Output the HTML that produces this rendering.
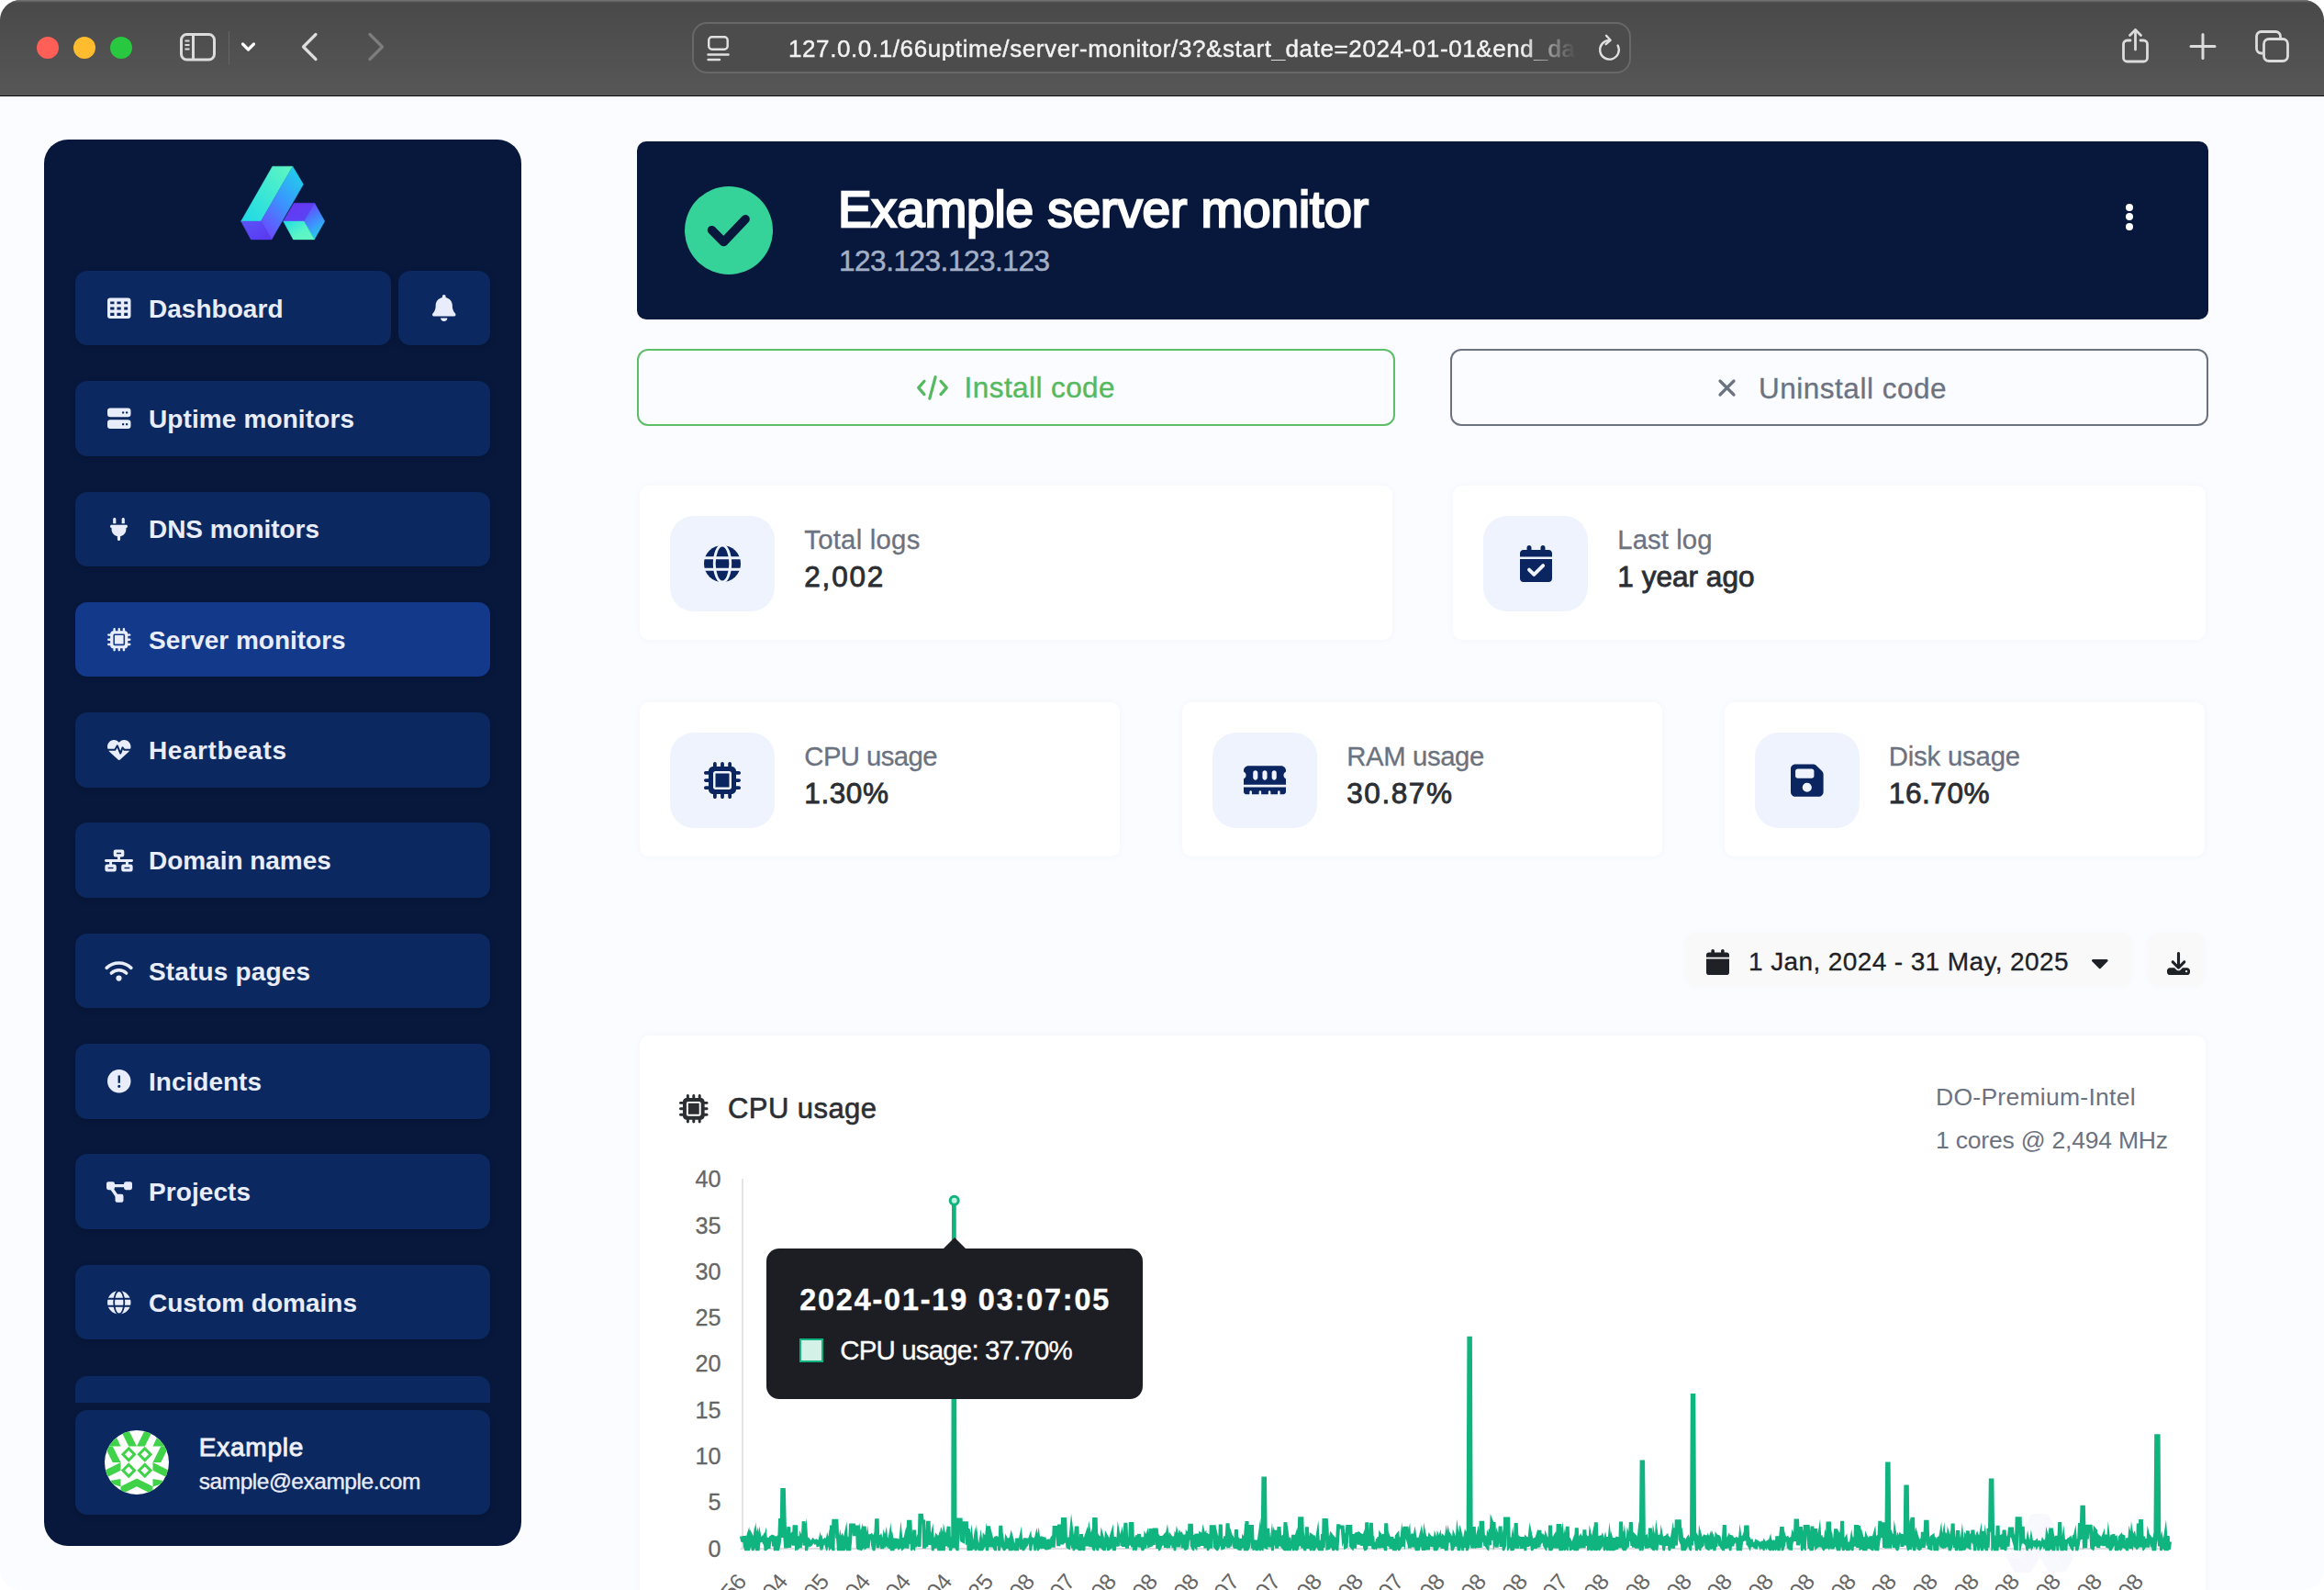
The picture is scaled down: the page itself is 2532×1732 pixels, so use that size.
<!DOCTYPE html>
<html lang="en"><head><meta charset="utf-8"><title>Example server monitor</title>
<style>
html,body{margin:0;padding:0;background:#fff}
body{width:2532px;height:1732px;overflow:hidden;position:relative;font-family:"Liberation Sans",Arial,sans-serif}
#win{position:absolute;left:0;top:0;width:2532px;height:1732px;border-radius:22px;overflow:hidden;background:#fafcff}
.a{position:absolute}
.t{position:absolute;white-space:nowrap;line-height:1;display:block}
svg{position:absolute;overflow:visible}
#tb{left:0;top:0;width:2532px;height:104px;background:linear-gradient(#494949,#4f4f4f 45%,#575757);border-bottom:1px solid #0c0c0c;box-sizing:content-box}
.nav{left:82px;width:452px;height:81.6px;border-radius:13px;background:#0b2960;box-shadow:0 2px 6px rgba(0,0,0,.18)}
.card{background:#fff;border-radius:10px;box-shadow:0 0 10px rgba(30,60,120,.035)}
.ib{background:#eef3fd;border-radius:26px}
</style></head><body><div id="win">
<div id="tb" class="a"></div><div class="a" style="left:0;top:0;width:2532px;height:3px;background:linear-gradient(#7a7a7a,#626262 45%,rgba(80,80,80,0))"></div><div class="a" style="left:40px;top:40px;width:24px;height:24px;border-radius:50%;background:#ff5f57"></div><div class="a" style="left:80px;top:40px;width:24px;height:24px;border-radius:50%;background:#febc2e"></div><div class="a" style="left:120px;top:40px;width:24px;height:24px;border-radius:50%;background:#28c840"></div><svg style="left:196px;top:36px" width="40" height="32" viewBox="0 0 40 32" fill="none" stroke="#dcdcdc" stroke-width="3">
<rect x="1.5" y="1.5" width="36" height="27.5" rx="6"/><line x1="14.5" y1="2" x2="14.5" y2="29"/>
<g stroke-width="2"><line x1="5.5" y1="8.5" x2="10.5" y2="8.5"/><line x1="5.5" y1="13" x2="10.5" y2="13"/><line x1="5.5" y1="17.5" x2="10.5" y2="17.5"/></g></svg><div class="a" style="left:249px;top:34px;width:1px;height:36px;background:#666"></div><svg style="left:262px;top:45px" width="18" height="14" viewBox="0 0 18 14" fill="none" stroke="#fff" stroke-width="3.2" stroke-linecap="round" stroke-linejoin="round"><path d="M2.5 3 L8.5 9 L14.5 3"/></svg><svg style="left:326px;top:34px" width="24" height="34" viewBox="0 0 24 34" fill="none" stroke="#dedede" stroke-width="3.2" stroke-linecap="round" stroke-linejoin="round"><path d="M18 3.5 L4.5 17 L18 30.5"/></svg><svg style="left:398px;top:34px" width="24" height="34" viewBox="0 0 24 34" fill="none" stroke="#7d7d7d" stroke-width="3.2" stroke-linecap="round" stroke-linejoin="round"><path d="M5 3.5 L18.5 17 L5 30.5"/></svg><div class="a" style="left:754px;top:24px;width:1023px;height:56px;box-sizing:border-box;border:2px solid #686868;border-radius:16px;background:#4c4c4c"></div><svg style="left:770px;top:38px" width="26" height="30" viewBox="0 0 26 30" fill="none" stroke="#e0e0e0" stroke-width="2.4" stroke-linecap="round">
<rect x="2.2" y="2.2" width="20.5" height="13.5" rx="3.5"/><line x1="1.5" y1="21.5" x2="23.5" y2="21.5"/><line x1="1.5" y1="27" x2="14" y2="27"/></svg><span id="t0" class="t" style="left:859.0px;top:40.4px;font-size:26.0px;font-weight:400;color:#f2f2f2;letter-spacing:0.596px;-webkit-text-stroke:.45px #f2f2f2;-webkit-mask-image:linear-gradient(90deg,#000 93%,transparent 100%);mask-image:linear-gradient(90deg,#000 93%,transparent 100%);">127.0.0.1/66uptime/server-monitor/3?&amp;start_date=2024-01-01&amp;end_da</span><svg style="left:1739px;top:37px" width="30" height="32" viewBox="0 0 30 32" fill="none" stroke="#e0e0e0" stroke-width="2.4" stroke-linecap="round" stroke-linejoin="round">
<path d="M23.6 12.5 A10.3 10.3 0 1 1 14.5 7"/><path d="M11 1.8 L15.6 6.8 L10.6 11.2"/></svg><svg style="left:2310px;top:30px" width="34" height="40" viewBox="0 0 34 40" fill="none" stroke="#dcdcdc" stroke-width="2.8" stroke-linecap="round" stroke-linejoin="round">
<path d="M11 14 H7.5 a4 4 0 0 0 -4 4 V33 a4 4 0 0 0 4 4 H25.5 a4 4 0 0 0 4 -4 V18 a4 4 0 0 0 -4 -4 H22"/><path d="M16.5 24 V3"/><path d="M10.5 8.5 L16.5 2.5 L22.5 8.5"/></svg><svg style="left:2385px;top:36px" width="30" height="30" viewBox="0 0 30 30" fill="none" stroke="#dcdcdc" stroke-width="3" stroke-linecap="round"><path d="M15 1.5 V27.5 M2 14.5 H28"/></svg><svg style="left:2456px;top:32px" width="40" height="38" viewBox="0 0 40 38" fill="none" stroke="#dcdcdc" stroke-width="2.8" stroke-linejoin="round">
<rect x="10.5" y="10.5" width="26" height="24" rx="5.5" fill="#4f4f4f"/><path d="M9.5 26 H7.5 a5 5 0 0 1 -5 -5 V7.5 a5 5 0 0 1 5 -5 H23.5 a5 5 0 0 1 5 5 V9.5"/></svg><div class="a" style="left:48px;top:152px;width:520px;height:1532px;border-radius:26px;background:#08183d"></div><svg style="left:250px;top:170px" width="120" height="100" viewBox="0 0 1908 1590">
<defs>
<linearGradient id="lgA" x1="0" y1="1" x2="1" y2="0"><stop offset="0" stop-color="#1fd8e8"/><stop offset=".55" stop-color="#3fe9d2"/><stop offset="1" stop-color="#62f7c0"/></linearGradient>
<linearGradient id="lgB" x1=".8" y1="0" x2=".2" y2="1"><stop offset="0" stop-color="#20d0ea"/><stop offset=".5" stop-color="#3b93ff"/><stop offset="1" stop-color="#6b48ff"/></linearGradient>
<linearGradient id="lgC" x1="0" y1="0" x2="1" y2="1"><stop offset="0" stop-color="#5a55f5"/><stop offset="1" stop-color="#5a36f2"/></linearGradient>
<linearGradient id="lgD" x1="0" y1="0" x2="1" y2="1"><stop offset="0" stop-color="#6b32f0"/><stop offset="1" stop-color="#5548f5"/></linearGradient>
<linearGradient id="lgE" x1=".3" y1="0" x2=".7" y2="1"><stop offset="0" stop-color="#6a40ff"/><stop offset=".5" stop-color="#3f8cff"/><stop offset="1" stop-color="#22d6e6"/></linearGradient>
<linearGradient id="lgF" x1="0" y1="0" x2="1" y2="1"><stop offset="0" stop-color="#22dbe6"/><stop offset=".6" stop-color="#5af5c6"/><stop offset="1" stop-color="#62f7c0"/></linearGradient>
</defs>
<g stroke-width="7" stroke-linejoin="round"><polygon points="745,178 1095,178 545,1130 200,1130" fill="url(#lgA)" stroke="url(#lgA)"/>
<polygon points="1095,178 1280,490 730,1445 545,1130" fill="url(#lgB)" stroke="url(#lgB)"/>
<polygon points="200,1130 545,1130 730,1445 372,1445" fill="url(#lgC)" stroke="url(#lgC)"/>
<polygon points="1115,815 1475,815 1292,1130 932,1130" fill="url(#lgD)" stroke="url(#lgD)"/>
<polygon points="1475,815 1650,1130 1470,1445 1292,1130" fill="url(#lgE)" stroke="url(#lgE)"/>
<polygon points="932,1130 1292,1130 1470,1445 1105,1445" fill="url(#lgF)" stroke="url(#lgF)"/></g>
</svg><div class="a nav" style="top:294.9px;width:344px;background:#0b2960"></div><svg style="left:116.9px;top:322.9px;color:#e9edfb" width="25.5" height="25.5" viewBox="0 0 512 512" fill="currentColor" preserveAspectRatio="none"><path fill-rule="evenodd" d="M64 32H448a64 64 0 0 1 64 64V416a64 64 0 0 1-64 64H64a64 64 0 0 1-64-64V96a64 64 0 0 1 64-64Z M64 108h86v57h-86z M210 108h86v57h-86z M366 108h78v57h-78z M64 232h86v58h-86z M210 232h86v58h-86z M366 232h78v58h-78z M64 356h86v64h-86z M210 356h86v64h-86z M366 356h78v64h-78z"/></svg><span id="t1" class="t" style="left:162.0px;top:322.8px;font-size:28.0px;font-weight:700;color:#e9edfb;letter-spacing:0.031px;">Dashboard</span><div class="a nav" style="top:415.2px;width:452px;background:#0b2960"></div><svg style="left:116.9px;top:443.2px;color:#e9edfb" width="25.5" height="25.5" viewBox="0 0 512 512" fill="currentColor" preserveAspectRatio="none"><path fill-rule="evenodd" d="M64 32H448a64 64 0 0 1 64 64v64a64 64 0 0 1-64 64H64a64 64 0 0 1-64-64V96a64 64 0 0 1 64-64Z M64 288H448a64 64 0 0 1 64 64v64a64 64 0 0 1-64 64H64a64 64 0 0 1-64-64v-64a64 64 0 0 1 64-64Z M320 128a24 24 0 1 0 48 0a24 24 0 1 0-48 0Z M400 128a24 24 0 1 0 48 0a24 24 0 1 0-48 0Z M320 384a24 24 0 1 0 48 0a24 24 0 1 0-48 0Z M400 384a24 24 0 1 0 48 0a24 24 0 1 0-48 0Z"/></svg><span id="t2" class="t" style="left:162.0px;top:443.1px;font-size:28.0px;font-weight:700;color:#e9edfb;letter-spacing:0.109px;">Uptime monitors</span><div class="a nav" style="top:535.5px;width:452px;background:#0b2960"></div><svg style="left:120.2px;top:563.8px;color:#e9edfb" width="19.0" height="25.0" viewBox="0 0 384 512" fill="currentColor" preserveAspectRatio="none"><path d="M96 0C78.3 0 64 14.3 64 32v96h64V32c0-17.7-14.3-32-32-32zM288 0c-17.700 0-32 14.300-32 32v96h64V32c0-17.700-14.300-32-32-32zM32 160c-17.700 0-32 14.300-32 32s14.300 32 32 32v32c0 77.400 55 142 128 156.800V480c0 17.700 14.300 32 32 32s32-14.300 32-32v-67.200C297 398 352 333.400 352 256v-32c17.700 0 32-14.300 32-32s-14.300-32-32-32H32z"/></svg><span id="t3" class="t" style="left:162.0px;top:563.4px;font-size:28.0px;font-weight:700;color:#e9edfb;letter-spacing:-0.062px;">DNS monitors</span><div class="a nav" style="top:655.8px;width:452px;background:#12398a"></div><svg style="left:116.9px;top:683.8px;color:#e9edfb" width="25.5" height="25.5" viewBox="0 0 512 512" fill="currentColor" preserveAspectRatio="none"><path fill-rule="evenodd" d="M176 24c0-13.300-10.700-24-24-24s-24 10.700-24 24v40c-35.300 0-64 28.700-64 64H24c-13.300 0-24 10.700-24 24s10.700 24 24 24h40v56H24c-13.300 0-24 10.700-24 24s10.700 24 24 24h40v56H24c-13.300 0-24 10.700-24 24s10.700 24 24 24h40c0 35.300 28.700 64 64 64v40c0 13.300 10.700 24 24 24s24-10.700 24-24v-40h56v40c0 13.300 10.700 24 24 24s24-10.700 24-24v-40h56v40c0 13.300 10.700 24 24 24s24-10.700 24-24v-40c35.300 0 64-28.700 64-64h40c13.300 0 24-10.700 24-24s-10.700-24-24-24h-40v-56h40c13.300 0 24-10.700 24-24s-10.700-24-24-24h-40v-56h40c13.300 0 24-10.700 24-24s-10.700-24-24-24h-40c0-35.300-28.700-64-64-64V24c0-13.300-10.700-24-24-24s-24 10.700-24 24v40h-56V24c0-13.300-10.700-24-24-24s-24 10.700-24 24v40h-56V24zM160 128h192c17.700 0 32 14.300 32 32v192c0 17.700-14.300 32-32 32H160c-17.700 0-32-14.300-32-32V160c0-17.700 14.300-32 32-32zm192 32H160v192h192V160z"/></svg><span id="t4" class="t" style="left:162.0px;top:683.7px;font-size:28.0px;font-weight:700;color:#e9edfb;letter-spacing:-0.004px;">Server monitors</span><div class="a nav" style="top:776.1px;width:452px;background:#0b2960"></div><svg style="left:116.9px;top:804.1px;color:#e9edfb" width="25.5" height="25.5" viewBox="0 0 512 512" fill="currentColor" preserveAspectRatio="none"><path d="M47.6 300.4L228.300 469.100c7.500 7 17.400 10.900 27.700 10.900s20.200-3.900 27.700-10.900L464.400 300.400c30.400-28.300 47.600-68 47.600-109.500v-5.800c0-69.900-50.500-129.500-119.400-141C347 36.500 300.600 51.400 268 84L256 96 244 84c-32.600-32.600-79-47.500-124.600-39.900C50.500 55.600 0 115.200 0 185.100v5.800c0 41.500 17.200 81.200 47.600 109.500z"/><path d="M-10 258H166l52-92 68 166 46-124 40 50H522" fill="none" stroke="#0b2960" stroke-width="40" stroke-linejoin="round"/></svg><span id="t5" class="t" style="left:162.0px;top:804.0px;font-size:28.0px;font-weight:700;color:#e9edfb;letter-spacing:0.585px;">Heartbeats</span><div class="a nav" style="top:896.4px;width:452px;background:#0b2960"></div><svg style="left:114.2px;top:924.7px;color:#e9edfb" width="31.0" height="25.0" viewBox="0 0 640 512" fill="currentColor" preserveAspectRatio="none"><g fill="none" stroke="currentColor" stroke-width="68" stroke-linejoin="round"><rect x="234" y="42" width="172" height="100" rx="14"/><rect x="42" y="370" width="188" height="100" rx="14"/><rect x="410" y="370" width="188" height="100" rx="14"/><path d="M320 150V256M136 364V256M504 364V256" stroke-width="60"/><path d="M30 256H610" stroke-width="60" stroke-linecap="round"/></g></svg><span id="t6" class="t" style="left:162.0px;top:924.3px;font-size:28.0px;font-weight:700;color:#e9edfb;letter-spacing:-0.034px;">Domain names</span><div class="a nav" style="top:1016.7px;width:452px;background:#0b2960"></div><svg style="left:114.2px;top:1045.0px;color:#e9edfb" width="31.0" height="25.0" viewBox="0 0 640 512" fill="currentColor" preserveAspectRatio="none"><g fill="none" stroke="currentColor" stroke-width="74" stroke-linecap="round"><path d="M44 192A400 400 0 0 1 596 192"/><path d="M152 308A245 245 0 0 1 488 308"/></g><circle cx="320" cy="420" r="64"/></svg><span id="t7" class="t" style="left:162.0px;top:1044.6px;font-size:28.0px;font-weight:700;color:#e9edfb;letter-spacing:0.156px;">Status pages</span><div class="a nav" style="top:1137.0px;width:452px;background:#0b2960"></div><svg style="left:116.9px;top:1165.0px;color:#e9edfb" width="25.5" height="25.5" viewBox="0 0 512 512" fill="currentColor" preserveAspectRatio="none"><path fill-rule="evenodd" d="M256 0a256 256 0 1 0 0 512a256 256 0 1 0 0-512Z M232 128h48v168h-48Z M224 368a32 32 0 1 0 64 0a32 32 0 1 0-64 0Z"/></svg><span id="t8" class="t" style="left:162.0px;top:1164.9px;font-size:28.0px;font-weight:700;color:#e9edfb;letter-spacing:0.010px;">Incidents</span><div class="a nav" style="top:1257.3px;width:452px;background:#0b2960"></div><svg style="left:115.7px;top:1285.6px;color:#e9edfb" width="28.0" height="25.0" viewBox="0 0 576 512" fill="currentColor" preserveAspectRatio="none"><rect x="0" y="24" width="184" height="184" rx="44"/><rect x="392" y="24" width="184" height="184" rx="44"/><rect x="196" y="304" width="184" height="184" rx="44"/><path d="M150 116H430M110 170L270 400" fill="none" stroke="currentColor" stroke-width="70"/></svg><span id="t9" class="t" style="left:162.0px;top:1285.2px;font-size:28.0px;font-weight:700;color:#e9edfb;letter-spacing:0.071px;">Projects</span><div class="a nav" style="top:1377.6px;width:452px;background:#0b2960"></div><svg style="left:116.9px;top:1405.6px;color:#e9edfb" width="25.5" height="25.5" viewBox="0 0 512 512" fill="currentColor" preserveAspectRatio="none"><circle cx="256" cy="256" r="256"/><g fill="none" stroke="#0b2960" stroke-width="36"><path d="M0 176H512M0 336H512"/><ellipse cx="256" cy="256" rx="112" ry="256"/></g></svg><span id="t10" class="t" style="left:162.0px;top:1405.5px;font-size:28.0px;font-weight:700;color:#e9edfb;letter-spacing:-0.011px;">Custom domains</span><div class="a nav" style="left:434px;top:294.9px;width:100px"></div><svg style="left:471.2px;top:321.3px;color:#e9edfb" width="25.5" height="29.0" viewBox="0 0 448 512" fill="currentColor" preserveAspectRatio="none"><path d="M224 0c-17.700 0-32 14.300-32 32v19.200C119 66 64 130.600 64 208v18.800c0 47-17.300 92.400-48.500 127.600l-7.400 8.300c-8.400 9.400-10.400 22.900-5.300 34.400S19.400 416 32 416h384c12.600 0 24-7.400 29.200-18.900s3.100-25-5.300-34.400l-7.400-8.300C401.300 319.200 384 273.900 384 226.800V208c0-77.400-55-142-128-156.800V32c0-17.700-14.300-32-32-32zm45.300 493.300c12-12 18.700-28.300 18.700-45.300h-128c0 17 6.700 33.300 18.700 45.300s28.300 18.700 45.300 18.700s33.300-6.700 45.300-18.700z"/></svg><div class="a nav" style="top:1498.5px;height:29px;border-radius:13px 13px 0 0;box-shadow:none"></div><div class="a nav" style="top:1536px;height:114px"></div><svg style="left:114px;top:1558px" width="70" height="70" viewBox="0 0 70 70">
<defs><clipPath id="avc"><circle cx="35" cy="35" r="35"/></clipPath></defs>
<g clip-path="url(#avc)"><rect width="70" height="70" fill="#fff"/>
<g fill="#40d249">
<polygon points="17.5,0 26.25,0 35,17.5 26.25,17.5"/><polygon points="52.5,0 43.75,0 35,17.5 43.75,17.5"/>
<polygon points="61.25,17.5 70,17.5 61.25,35 52.5,35"/><polygon points="8.75,17.5 0,17.5 8.75,35 17.5,35"/>
<polygon points="52.5,35 70,43.75 70,52.5 52.5,43.75"/><polygon points="17.5,35 0,43.75 0,52.5 17.5,43.75"/>
<polygon points="17.5,61.25 35,52.5 52.5,61.25 52.5,70 35,61.25 17.500,70"/>
<polygon points="0,17.5 17.5,17.5 13.2,8.3"/><polygon points="70,17.5 52.5,17.5 56.8,8.300"/>
<polygon points="17.5,53 17.5,61.6 5,57.5 0,64 0,56"/><polygon points="52.5,53 52.5,61.6 65,57.5 70,64 70,56"/>
<path fill-rule="evenodd" d="M26.25 17.85l8.4 8.4-8.4 8.4-8.4-8.4zM26.25 22.05l-4.2 4.2 4.2 4.2 4.2-4.2z M43.75 17.85l8.4 8.4-8.4 8.4-8.4-8.4zM43.75 22.05l-4.2 4.2 4.2 4.2 4.2-4.2z M26.25 35.35l8.4 8.4-8.4 8.4-8.4-8.4zM26.25 39.55l-4.2 4.2 4.2 4.2 4.2-4.2z M43.75 35.35l8.4 8.400-8.4 8.4-8.4-8.4zM43.75 39.55l-4.2 4.2 4.2 4.2 4.200-4.2z"/>
</g></g></svg><span id="t11" class="t" style="left:216.8px;top:1563.3px;font-size:28.0px;font-weight:400;color:#eef1fb;letter-spacing:0.760px;-webkit-text-stroke:.9px #eef1fb;">Example</span><span id="t12" class="t" style="left:216.8px;top:1602.3px;font-size:24.5px;font-weight:400;color:#e9edfb;letter-spacing:-0.473px;-webkit-text-stroke:.35px #e9edfb;">sample@example.com</span><div class="a" style="left:694px;top:154px;width:1712px;height:194px;border-radius:10px;background:#07183c"></div><div class="a" style="left:746px;top:203px;width:96px;height:96px;border-radius:50%;background:#35d399"></div><svg style="left:746px;top:203px" width="96" height="96" viewBox="0 0 96 96" fill="none" stroke="#07183c" stroke-width="9.5" stroke-linecap="round" stroke-linejoin="round"><path d="M29.5 47.7 L42.4 60.6 L66.1 35.8"/></svg><span id="t13" class="t" style="left:913.0px;top:200.7px;font-size:55.0px;font-weight:400;color:#fff;letter-spacing:-0.131px;-webkit-text-stroke:2.3px #fff;">Example server monitor</span><span id="t14" class="t" style="left:914.0px;top:269.3px;font-size:31.5px;font-weight:400;color:#a3afc4;letter-spacing:-0.463px;-webkit-text-stroke:.5px #a3afc4;">123.123.123.123</span><div class="a" style="left:2316px;top:221.5px;width:8px;height:8px;border-radius:50%;background:#fff"></div><div class="a" style="left:2316px;top:232.2px;width:8px;height:8px;border-radius:50%;background:#fff"></div><div class="a" style="left:2316px;top:243.0px;width:8px;height:8px;border-radius:50%;background:#fff"></div><div class="a" style="left:694px;top:380px;width:826px;height:84px;box-sizing:border-box;border:2px solid #5fbf68;border-radius:12px"></div><svg style="left:997.5px;top:407.5px" width="36" height="28.8" viewBox="0 0 40 32" fill="none" stroke="#55b95f" stroke-width="3.6" stroke-linecap="round" stroke-linejoin="round"><path d="M10 8 L3 16 L10 24"/><path d="M30 8 L37 16 L30 24"/><path d="M23.5 3 L16.5 29"/></svg><span id="t15" class="t" style="left:1050.6px;top:407.3px;font-size:31.5px;font-weight:400;color:#55b95f;letter-spacing:0.422px;-webkit-text-stroke:.4px #55b95f;">Install code</span><div class="a" style="left:1580px;top:380px;width:826px;height:84px;box-sizing:border-box;border:2px solid #6b7280;border-radius:12px"></div><svg style="left:1871px;top:412px" width="21" height="21" viewBox="0 0 21 21" fill="none" stroke="#6b7280" stroke-width="3.2" stroke-linecap="round"><path d="M3 3 L18 18 M18 3 L3 18"/></svg><span id="t16" class="t" style="left:1916.0px;top:407.8px;font-size:31.5px;font-weight:400;color:#6b7280;letter-spacing:0.511px;-webkit-text-stroke:.3px #6b7280;">Uninstall code</span><div class="a card" style="left:697.0px;top:528.5px;width:820.0px;height:168.7px"></div><div class="a ib" style="left:730.0px;top:562.0px;width:114px;height:104px"></div><svg style="left:767.0px;top:594.0px;color:#0b2560" width="40.0" height="40.0" viewBox="0 0 512 512" fill="currentColor" preserveAspectRatio="none"><circle cx="256" cy="256" r="256"/><g fill="none" stroke="#eef3fd" stroke-width="36"><path d="M0 176H512M0 336H512"/><ellipse cx="256" cy="256" rx="112" ry="256"/></g></svg><span id="t17" class="t" style="left:876.3px;top:572.9px;font-size:29.3px;font-weight:400;color:#6b7280;letter-spacing:0.247px;-webkit-text-stroke:.3px #6b7280;">Total logs</span><span id="t18" class="t" style="left:876.3px;top:613.0px;font-size:31.5px;font-weight:400;color:#2b2e33;letter-spacing:1.793px;-webkit-text-stroke:.85px #2b2e33;">2,002</span><div class="a card" style="left:1583.0px;top:528.5px;width:820.0px;height:168.7px"></div><div class="a ib" style="left:1616.0px;top:562.0px;width:114px;height:104px"></div><svg style="left:1655.5px;top:594.0px;color:#0b2560" width="35.0" height="40.0" viewBox="0 0 448 512" fill="currentColor" preserveAspectRatio="none"><path fill-rule="evenodd" d="M128 0c17.700 0 32 14.300 32 32v32h128V32c0-17.700 14.300-32 32-32s32 14.300 32 32v32h48c26.500 0 48 21.500 48 48v48H0v-48c0-26.500 21.500-48 48-48h48V32c0-17.700 14.300-32 32-32zM0 192h448v272c0 26.500-21.500 48-48 48H48c-26.500 0-48-21.500-48-48V192z"/><path d="M128 340 L196 408 L322 282" fill="none" stroke="#eef3fd" stroke-width="50" stroke-linecap="round" stroke-linejoin="round"/></svg><span id="t19" class="t" style="left:1762.3px;top:572.9px;font-size:29.3px;font-weight:400;color:#6b7280;letter-spacing:0.082px;-webkit-text-stroke:.3px #6b7280;">Last log</span><span id="t20" class="t" style="left:1762.3px;top:613.0px;font-size:31.5px;font-weight:400;color:#2b2e33;letter-spacing:0.038px;-webkit-text-stroke:.85px #2b2e33;">1 year ago</span><div class="a card" style="left:697.0px;top:764.5px;width:523.0px;height:168.7px"></div><div class="a ib" style="left:730.0px;top:798.0px;width:114px;height:104px"></div><svg style="left:767.0px;top:830.0px;color:#0b2560" width="40.0" height="40.0" viewBox="0 0 512 512" fill="currentColor" preserveAspectRatio="none"><path fill-rule="evenodd" d="M176 24c0-13.300-10.700-24-24-24s-24 10.700-24 24v40c-35.300 0-64 28.700-64 64H24c-13.300 0-24 10.700-24 24s10.700 24 24 24h40v56H24c-13.300 0-24 10.700-24 24s10.700 24 24 24h40v56H24c-13.300 0-24 10.700-24 24s10.700 24 24 24h40c0 35.300 28.700 64 64 64v40c0 13.300 10.700 24 24 24s24-10.700 24-24v-40h56v40c0 13.300 10.700 24 24 24s24-10.700 24-24v-40h56v40c0 13.300 10.700 24 24 24s24-10.700 24-24v-40c35.300 0 64-28.700 64-64h40c13.300 0 24-10.700 24-24s-10.700-24-24-24h-40v-56h40c13.300 0 24-10.700 24-24s-10.700-24-24-24h-40v-56h40c13.300 0 24-10.700 24-24s-10.700-24-24-24h-40c0-35.300-28.700-64-64-64V24c0-13.300-10.700-24-24-24s-24 10.700-24 24v40h-56V24c0-13.300-10.700-24-24-24s-24 10.700-24 24v40h-56V24zM160 128h192c17.700 0 32 14.300 32 32v192c0 17.700-14.300 32-32 32H160c-17.700 0-32-14.300-32-32V160c0-17.700 14.300-32 32-32zm192 32H160v192h192V160z"/></svg><span id="t21" class="t" style="left:876.3px;top:808.9px;font-size:29.3px;font-weight:400;color:#6b7280;letter-spacing:-0.566px;-webkit-text-stroke:.3px #6b7280;">CPU usage</span><span id="t22" class="t" style="left:876.3px;top:849.0px;font-size:31.5px;font-weight:400;color:#2b2e33;letter-spacing:0.593px;-webkit-text-stroke:.85px #2b2e33;">1.30%</span><div class="a card" style="left:1288.0px;top:764.5px;width:523.0px;height:168.7px"></div><div class="a ib" style="left:1321.0px;top:798.0px;width:114px;height:104px"></div><svg style="left:1355.0px;top:829.4px;color:#0b2560" width="46.0" height="41.3" viewBox="0 0 576 512" fill="currentColor" preserveAspectRatio="none"><path fill-rule="evenodd" d="M64 64C28.700 64 0 92.700 0 128v7.400c0 6.800 4.400 12.600 10.100 16.300C23.300 160.300 32 175.100 32 192s-8.700 31.700-21.900 40.300C4.400 236 0 241.800 0 248.600V320h576v-71.400c0-6.800-4.400-12.600-10.100-16.300C552.700 223.700 544 208.900 544 192s8.700-31.700 21.900-40.300c5.700-3.700 10.100-9.500 10.100-16.300V128c0-35.300-28.700-64-64-64H64zM576 352H0v64c0 17.700 14.300 32 32 32h48v-32c0-8.800 7.200-16 16-16s16 7.200 16 16v32h96v-32c0-8.800 7.200-16 16-16s16 7.200 16 16v32h96v-32c0-8.800 7.200-16 16-16s16 7.200 16 16v32h96v-32c0-8.800 7.200-16 16-16s16 7.200 16 16v32h48c17.700 0 32-14.300 32-32v-64zM192 160v64c0 17.700-14.300 32-32 32s-32-14.300-32-32v-64c0-17.700 14.300-32 32-32s32 14.300 32 32zm128 0v64c0 17.700-14.300 32-32 32s-32-14.300-32-32v-64c0-17.700 14.300-32 32-32s32 14.300 32 32zm128 0v64c0 17.700-14.300 32-32 32s-32-14.300-32-32v-64c0-17.700 14.300-32 32-32s32 14.300 32 32z"/></svg><span id="t23" class="t" style="left:1467.3px;top:808.9px;font-size:29.3px;font-weight:400;color:#6b7280;letter-spacing:-0.385px;-webkit-text-stroke:.3px #6b7280;">RAM usage</span><span id="t24" class="t" style="left:1467.3px;top:849.0px;font-size:31.5px;font-weight:400;color:#2b2e33;letter-spacing:1.551px;-webkit-text-stroke:.85px #2b2e33;">30.87%</span><div class="a card" style="left:1878.5px;top:764.5px;width:523.0px;height:168.7px"></div><div class="a ib" style="left:1911.5px;top:798.0px;width:114px;height:104px"></div><svg style="left:1950.7px;top:829.8px;color:#0b2560" width="35.6" height="40.4" viewBox="0 0 448 512" fill="currentColor" preserveAspectRatio="none"><path fill-rule="evenodd" d="M64 32C28.700 32 0 60.700 0 96v320c0 35.300 28.700 64 64 64h320c35.300 0 64-28.700 64-64V173.300c0-17-6.700-33.300-18.700-45.300L352 50.700c-12-12-28.300-18.700-45.300-18.700H64zm0 96c0-17.700 14.300-32 32-32h192c17.700 0 32 14.300 32 32v64c0 17.700-14.300 32-32 32H96c-17.700 0-32-14.300-32-32v-64zM224 288a64 64 0 1 1 0 128a64 64 0 1 1 0-128z"/></svg><span id="t25" class="t" style="left:2057.8px;top:808.9px;font-size:29.3px;font-weight:400;color:#6b7280;letter-spacing:-0.182px;-webkit-text-stroke:.3px #6b7280;">Disk usage</span><span id="t26" class="t" style="left:2057.8px;top:849.0px;font-size:31.5px;font-weight:400;color:#2b2e33;letter-spacing:0.571px;-webkit-text-stroke:.85px #2b2e33;">16.70%</span><div class="a" style="left:1836px;top:1016px;width:487px;height:59px;border-radius:12px;background:#f9f9fa;box-shadow:0 0 8px rgba(0,0,0,.02)"></div><div class="a" style="left:2340px;top:1016px;width:62px;height:59px;border-radius:12px;background:#f9f9fa;box-shadow:0 0 8px rgba(0,0,0,.02)"></div><svg style="left:1859.0px;top:1034.0px;color:#1e2126" width="25.0" height="28.0" viewBox="0 0 448 512" fill="currentColor" preserveAspectRatio="none"><path d="M96 32v32H48C21.500 64 0 85.500 0 112v48h448v-48c0-26.500-21.500-48-48-48h-48V32c0-17.700-14.300-32-32-32s-32 14.300-32 32v32H160V32c0-17.700-14.300-32-32-32S96 14.300 96 32zM448 192H0v272c0 26.500 21.500 48 48 48h352c26.500 0 48-21.500 48-48V192z"/></svg><span id="t27" class="t" style="left:1905.0px;top:1034.3px;font-size:28.0px;font-weight:400;color:#1e2126;letter-spacing:0.387px;-webkit-text-stroke:.3px #1e2126;">1 Jan, 2024 - 31 May, 2025</span><svg style="left:2278.5px;top:1044.8px" width="17.6" height="10.2" viewBox="0 0 19 11"><path d="M1.5 0H17.500a1.500 1.500 0 0 1 1.100 2.500L10.600 10.500a1.500 1.500 0 0 1-2.200 0L.4 2.500A1.500 1.500 0 0 1 1.500 0Z" fill="#1e2126"/></svg><svg style="left:2360.8px;top:1036.5px;color:#1e2126" width="25.0" height="25.0" viewBox="0 0 512 512" fill="currentColor" preserveAspectRatio="none"><path fill-rule="evenodd" d="M288 32c0-17.700-14.300-32-32-32s-32 14.300-32 32v242.700l-73.400-73.400c-12.500-12.500-32.800-12.500-45.300 0s-12.500 32.800 0 45.300l128 128c12.500 12.500 32.800 12.500 45.300 0l128-128c12.500-12.500 12.500-32.800 0-45.300s-32.800-12.500-45.300 0L288 274.700V32zM64 352c-35.300 0-64 28.700-64 64v32c0 35.300 28.700 64 64 64h384c35.300 0 64-28.700 64-64v-32c0-35.300-28.700-64-64-64H346.500l-45.300 45.300c-25 25-65.500 25-90.500 0L165.500 352H64zm368 56a24 24 0 1 1 0 48a24 24 0 1 1 0-48z"/></svg><div class="a card" style="left:697px;top:1128px;width:1706px;height:700px"></div><svg style="left:740.0px;top:1192.0px;color:#2b2e33" width="31.6" height="31.6" viewBox="0 0 512 512" fill="currentColor" preserveAspectRatio="none"><path fill-rule="evenodd" d="M176 24c0-13.300-10.700-24-24-24s-24 10.700-24 24v40c-35.300 0-64 28.700-64 64H24c-13.300 0-24 10.700-24 24s10.700 24 24 24h40v56H24c-13.300 0-24 10.700-24 24s10.700 24 24 24h40v56H24c-13.300 0-24 10.700-24 24s10.700 24 24 24h40c0 35.300 28.700 64 64 64v40c0 13.300 10.700 24 24 24s24-10.700 24-24v-40h56v40c0 13.300 10.700 24 24 24s24-10.700 24-24v-40h56v40c0 13.300 10.700 24 24 24s24-10.700 24-24v-40c35.300 0 64-28.700 64-64h40c13.300 0 24-10.700 24-24s-10.700-24-24-24h-40v-56h40c13.300 0 24-10.700 24-24s-10.700-24-24-24h-40v-56h40c13.300 0 24-10.700 24-24s-10.700-24-24-24h-40c0-35.300-28.700-64-64-64V24c0-13.300-10.700-24-24-24s-24 10.700-24 24v40h-56V24c0-13.300-10.700-24-24-24s-24 10.700-24 24v40h-56V24zM160 128h192c17.700 0 32 14.300 32 32v192c0 17.700-14.300 32-32 32H160c-17.700 0-32-14.300-32-32V160c0-17.700 14.300-32 32-32zm192 32H160v192h192V160z"/></svg><span id="t28" class="t" style="left:793.0px;top:1192.2px;font-size:31.0px;font-weight:400;color:#2b2e33;letter-spacing:0.434px;-webkit-text-stroke:.6px #2b2e33;">CPU usage</span><span id="t29" class="t" style="left:2109.0px;top:1181.6px;font-size:26.5px;font-weight:400;color:#6b7280;letter-spacing:0.272px;">DO-Premium-Intel</span><span id="t30" class="t" style="left:2109.0px;top:1229.1px;font-size:26.5px;font-weight:400;color:#6b7280;letter-spacing:-0.204px;">1 cores @ 2,494 MHz</span><svg style="left:2176px;top:1640px;opacity:.035" width="96" height="80" viewBox="0 0 1908 1590"><polygon points="745,178 1095,178 545,1130 200,1130" fill="#5b6ee0"/><polygon points="1095,178 1280,490 730,1445 545,1130" fill="#4a4ad8"/><polygon points="200,1130 545,1130 730,1445 372,1445" fill="#4b3fd0"/><polygon points="1115,815 1475,815 1292,1130 932,1130" fill="#5a3fd0"/><polygon points="1475,815 1650,1130 1470,1445 1292,1130" fill="#4a50d8"/><polygon points="932,1130 1292,1130 1470,1445 1105,1445" fill="#5b6ee0"/></svg><span id="t31" class="t" style="right:1746.5px;top:1674.6px;font-size:25.2px;font-weight:400;color:#666;-webkit-text-stroke:.3px #666;">0</span><span id="t32" class="t" style="right:1746.5px;top:1624.3px;font-size:25.2px;font-weight:400;color:#666;-webkit-text-stroke:.3px #666;">5</span><span id="t33" class="t" style="right:1746.5px;top:1574.0px;font-size:25.2px;font-weight:400;color:#666;-webkit-text-stroke:.3px #666;">10</span><span id="t34" class="t" style="right:1746.5px;top:1523.7px;font-size:25.2px;font-weight:400;color:#666;-webkit-text-stroke:.3px #666;">15</span><span id="t35" class="t" style="right:1746.5px;top:1473.4px;font-size:25.2px;font-weight:400;color:#666;-webkit-text-stroke:.3px #666;">20</span><span id="t36" class="t" style="right:1746.5px;top:1423.2px;font-size:25.2px;font-weight:400;color:#666;-webkit-text-stroke:.3px #666;">25</span><span id="t37" class="t" style="right:1746.5px;top:1372.9px;font-size:25.2px;font-weight:400;color:#666;-webkit-text-stroke:.3px #666;">30</span><span id="t38" class="t" style="right:1746.5px;top:1322.6px;font-size:25.2px;font-weight:400;color:#666;-webkit-text-stroke:.3px #666;">35</span><span id="t39" class="t" style="right:1746.5px;top:1272.3px;font-size:25.2px;font-weight:400;color:#666;-webkit-text-stroke:.3px #666;">40</span><div class="a" style="left:808px;top:1284px;width:2px;height:404px;background:#e3e3e3"></div><div class="a" style="left:807px;top:1686px;width:1558px;height:2px;background:#dedede"></div><svg style="left:800px;top:1280px" width="1580" height="420" viewBox="0 0 1580 420"><defs><clipPath id="cpa"><rect x="6" y="0" width="1562" height="409.3"/></clipPath></defs><polyline clip-path="url(#cpa)" fill="none" stroke="#10b47f" stroke-width="4" stroke-linejoin="miter" stroke-miterlimit="10" points="8.0,393.4 8.8,397.9 9.6,398.3 10.3,395.0 11.1,394.9 11.9,404.6 12.7,406.9 13.4,396.1 14.2,396.5 15.0,393.9 15.8,405.7 16.6,403.2 17.3,398.8 18.1,392.4 18.9,394.0 19.7,402.6 20.4,406.5 21.2,404.5 22.0,398.3 22.8,406.0 23.6,397.2 24.3,403.1 25.1,398.1 25.9,405.7 26.7,398.0 27.4,393.9 28.2,398.3 29.0,397.7 29.8,397.9 30.6,396.4 31.3,397.7 32.1,395.7 32.9,398.9 33.7,395.8 34.4,406.9 35.2,406.2 36.0,405.4 36.8,394.8 37.5,406.9 38.3,398.9 39.1,397.1 39.9,394.8 40.7,394.4 41.4,393.8 42.2,394.1 43.0,404.4 43.8,393.5 44.5,403.7 45.3,398.7 46.1,396.6 46.9,395.7 47.7,405.6 48.4,402.9 49.2,397.7 50.0,376.0 50.8,376.0 51.5,394.9 52.3,343.1 53.1,343.1 53.9,343.1 54.7,378.4 55.4,396.2 56.2,406.4 57.0,398.2 57.8,397.2 58.5,394.3 59.3,383.2 60.1,405.8 60.9,396.1 61.7,394.5 62.4,398.6 63.2,397.1 64.0,393.6 64.8,403.7 65.5,383.3 66.3,383.3 67.1,383.3 67.9,404.5 68.7,403.3 69.4,405.5 70.2,404.7 71.0,393.3 71.8,406.0 72.5,395.0 73.3,396.8 74.1,397.3 74.9,394.8 75.7,377.2 76.4,403.4 77.2,398.0 78.0,392.6 78.8,405.0 79.5,401.0 80.3,399.6 81.1,398.0 81.9,399.1 82.7,402.5 83.4,402.0 84.2,400.7 85.0,399.5 85.8,398.1 86.5,398.9 87.3,399.3 88.1,400.3 88.9,399.7 89.6,398.7 90.4,399.2 91.2,402.9 92.0,402.6 92.8,401.5 93.5,398.2 94.3,402.1 95.1,399.1 95.9,402.2 96.6,399.7 97.4,398.7 98.2,398.0 99.0,400.5 99.8,400.4 100.5,403.0 101.3,398.9 102.1,402.7 102.9,403.2 103.6,398.8 104.4,404.0 105.2,402.5 106.0,381.5 106.8,405.2 107.5,406.6 108.3,376.8 109.1,376.8 109.9,376.8 110.6,376.8 111.4,376.8 112.2,394.6 113.0,395.0 113.8,406.9 114.5,403.6 115.3,398.2 116.1,402.9 116.9,396.8 117.6,395.1 118.4,397.3 119.2,406.8 120.0,404.0 120.8,395.7 121.5,392.2 122.3,403.0 123.1,405.8 123.9,394.4 124.6,402.6 125.4,406.7 126.2,397.8 127.0,381.5 127.8,381.5 128.5,381.5 129.3,381.5 130.1,381.5 130.9,393.0 131.6,383.4 132.4,383.4 133.2,383.4 134.0,383.4 134.8,405.6 135.5,406.4 136.3,406.5 137.1,393.3 137.9,397.2 138.6,393.7 139.4,405.4 140.2,404.4 141.0,395.8 141.7,382.7 142.5,393.2 143.3,404.5 144.1,403.7 144.9,398.3 145.6,406.0 146.4,396.8 147.2,395.9 148.0,393.3 148.7,393.4 149.5,392.6 150.3,393.5 151.1,403.6 151.9,406.1 152.6,398.4 153.4,394.2 154.2,395.6 155.0,376.3 155.7,376.3 156.5,406.2 157.3,395.0 158.1,394.6 158.9,396.9 159.6,395.4 160.4,398.2 161.2,407.0 162.0,395.8 162.7,405.5 163.5,396.2 164.3,398.9 165.1,395.4 165.9,403.8 166.6,395.1 167.4,403.4 168.2,403.3 169.0,398.8 169.7,406.7 170.5,397.8 171.3,404.9 172.1,399.7 172.9,404.4 173.6,395.6 174.4,405.3 175.2,405.2 176.0,403.7 176.7,395.8 177.5,406.4 178.3,398.5 179.1,398.9 179.9,405.2 180.6,404.7 181.4,397.0 182.2,405.2 183.0,395.2 183.7,405.5 184.5,404.7 185.3,398.4 186.1,397.0 186.9,393.5 187.6,398.0 188.4,406.6 189.2,397.1 190.0,377.8 190.7,377.8 191.5,377.8 192.3,398.4 193.1,397.8 193.8,404.5 194.6,402.5 195.4,404.0 196.2,386.5 197.0,405.3 197.7,397.8 198.5,399.2 199.3,396.2 200.1,395.7 200.8,393.8 201.6,405.0 202.4,370.8 203.2,370.8 204.0,370.8 204.7,377.4 205.5,377.4 206.3,377.4 207.1,406.7 207.8,393.4 208.6,403.6 209.4,403.4 210.2,398.5 211.0,378.7 211.7,378.7 212.5,402.9 213.3,392.5 214.1,402.8 214.8,396.7 215.6,393.0 216.4,403.0 217.2,397.2 218.0,398.1 218.7,406.6 219.5,397.6 220.3,394.2 221.1,395.3 221.8,394.9 222.6,402.6 223.4,398.6 224.2,403.4 225.0,397.6 225.7,402.9 226.5,394.8 227.3,398.0 228.1,404.0 228.8,393.9 229.6,397.9 230.4,397.7 231.2,394.3 232.0,404.4 232.7,395.0 233.5,382.9 234.3,405.8 235.1,395.9 235.8,406.3 236.6,404.2 237.4,398.9 238.2,406.3 239.0,27.9 239.7,27.9 240.5,393.8 241.3,399.2 242.1,405.2 242.8,406.8 243.6,375.5 244.4,375.5 245.2,375.5 245.9,375.5 246.7,375.5 247.5,397.0 248.3,398.1 249.1,398.5 249.8,379.2 250.6,379.2 251.4,379.2 252.2,379.2 252.9,379.2 253.7,402.8 254.5,385.0 255.3,403.0 256.1,399.0 256.8,406.3 257.6,405.1 258.4,398.3 259.2,406.1 259.9,405.3 260.7,405.4 261.5,404.1 262.3,398.1 263.1,403.9 263.8,398.0 264.6,405.2 265.4,404.8 266.2,404.8 266.9,406.6 267.7,404.4 268.5,399.4 269.3,405.2 270.1,397.0 270.8,405.4 271.6,404.0 272.4,394.4 273.2,395.4 273.9,405.1 274.7,397.3 275.5,404.7 276.3,398.8 277.1,382.3 277.8,404.8 278.6,396.7 279.4,405.4 280.2,395.8 280.9,398.5 281.7,397.3 282.5,397.9 283.3,404.7 284.1,406.5 284.8,395.4 285.6,395.1 286.4,395.6 287.2,403.8 287.9,395.3 288.7,403.8 289.5,399.0 290.3,381.8 291.1,398.6 291.8,397.2 292.6,403.8 293.4,403.7 294.2,406.9 294.9,405.6 295.7,405.2 296.5,397.0 297.3,398.4 298.0,398.0 298.8,406.9 299.6,398.2 300.4,405.8 301.2,398.2 301.9,394.7 302.7,397.5 303.5,404.5 304.3,402.8 305.0,403.2 305.8,406.2 306.6,403.6 307.4,406.0 308.2,395.7 308.9,403.4 309.7,399.2 310.5,398.4 311.3,398.8 312.0,395.7 312.8,405.7 313.6,405.5 314.4,397.2 315.2,406.4 315.9,404.7 316.7,395.4 317.5,403.6 318.3,402.6 319.0,398.9 319.8,398.1 320.6,399.1 321.4,398.7 322.2,396.3 322.9,403.2 323.7,397.4 324.5,396.7 325.3,397.6 326.0,399.1 326.8,398.0 327.6,403.1 328.4,397.9 329.2,394.4 329.9,398.8 330.7,403.3 331.5,398.0 332.3,404.5 333.0,403.4 333.8,393.5 334.6,406.5 335.4,394.2 336.2,403.2 336.9,402.5 337.7,394.7 338.5,406.9 339.3,397.4 340.0,406.4 340.8,406.5 341.6,406.1 342.4,396.7 343.2,404.1 343.9,404.9 344.7,403.8 345.5,403.1 346.3,395.6 347.0,394.7 347.8,405.7 348.6,384.0 349.4,384.0 350.1,384.0 350.9,384.0 351.7,384.0 352.5,396.1 353.3,404.1 354.0,382.6 354.8,382.6 355.6,382.6 356.4,382.6 357.1,402.5 357.9,374.9 358.7,374.9 359.5,374.9 360.3,374.9 361.0,397.8 361.8,397.2 362.6,397.2 363.4,404.7 364.1,405.1 364.9,394.6 365.7,403.2 366.5,395.2 367.3,387.0 368.0,392.7 368.8,406.5 369.6,391.6 370.4,405.8 371.1,404.8 371.9,393.2 372.7,384.6 373.5,384.6 374.3,405.0 375.0,404.6 375.8,406.6 376.6,395.8 377.4,405.2 378.1,391.0 378.9,405.6 379.7,404.7 380.5,406.6 381.3,394.7 382.0,403.9 382.8,395.3 383.6,392.9 384.4,404.2 385.1,397.1 385.9,397.1 386.7,390.0 387.5,394.3 388.3,405.0 389.0,397.1 389.8,393.6 390.6,402.7 391.4,405.1 392.1,375.0 392.9,375.0 393.7,375.0 394.5,403.6 395.3,405.4 396.0,393.7 396.8,394.9 397.6,395.1 398.4,403.7 399.1,403.3 399.9,404.2 400.7,394.2 401.5,396.9 402.2,403.8 403.0,406.3 403.8,396.7 404.6,404.6 405.4,393.7 406.1,395.0 406.9,403.1 407.7,406.9 408.5,405.9 409.2,405.7 410.0,396.7 410.8,393.8 411.6,391.2 412.4,402.8 413.1,405.0 413.9,394.1 414.7,402.7 415.5,397.0 416.2,396.9 417.0,397.4 417.8,404.4 418.6,392.6 419.4,396.9 420.1,396.9 420.9,397.7 421.7,394.5 422.5,403.8 423.2,392.0 424.0,404.8 424.8,393.7 425.6,387.6 426.4,378.9 427.1,393.9 427.9,406.7 428.7,394.8 429.5,403.5 430.2,395.4 431.0,403.0 431.8,380.0 432.6,380.0 433.4,380.0 434.1,405.5 434.9,394.4 435.7,406.0 436.5,405.4 437.2,406.4 438.0,403.4 438.8,392.4 439.6,404.7 440.4,396.7 441.1,391.0 441.9,403.8 442.7,403.9 443.5,394.3 444.2,402.8 445.0,406.8 445.8,404.6 446.6,394.4 447.4,406.7 448.1,394.6 448.9,396.2 449.7,393.8 450.5,402.7 451.2,395.5 452.0,403.7 452.8,403.4 453.6,385.2 454.3,404.2 455.1,396.7 455.9,395.9 456.7,402.9 457.5,386.5 458.2,386.5 459.0,386.5 459.8,386.5 460.6,394.9 461.3,407.0 462.1,394.2 462.9,395.4 463.7,405.0 464.5,403.2 465.2,395.0 466.0,395.1 466.8,395.1 467.6,403.2 468.3,393.9 469.1,393.0 469.9,405.9 470.7,396.1 471.5,392.2 472.2,397.8 473.0,406.2 473.8,394.2 474.6,403.1 475.3,394.3 476.1,395.5 476.9,403.4 477.7,393.6 478.5,406.2 479.2,396.0 480.0,402.7 480.8,395.6 481.6,397.7 482.3,392.8 483.1,396.4 483.9,405.4 484.7,395.3 485.5,391.8 486.2,393.2 487.0,392.2 487.8,394.7 488.6,406.3 489.3,393.4 490.1,393.4 490.9,404.9 491.7,406.7 492.5,406.4 493.2,395.2 494.0,397.5 494.8,388.0 495.6,397.4 496.3,381.8 497.1,381.8 497.9,381.8 498.7,403.4 499.5,405.0 500.2,394.8 501.0,394.2 501.8,402.9 502.6,404.0 503.3,390.9 504.1,404.0 504.9,390.5 505.7,405.1 506.4,396.0 507.2,402.9 508.0,391.3 508.8,391.9 509.6,403.8 510.3,396.4 511.1,390.6 511.9,393.9 512.7,392.7 513.4,406.3 514.2,390.2 515.0,403.6 515.8,392.3 516.6,405.4 517.3,404.0 518.1,391.2 518.9,406.6 519.7,383.2 520.4,383.2 521.2,383.2 522.0,383.2 522.8,383.2 523.6,404.2 524.3,405.0 525.1,393.1 525.9,396.3 526.7,405.4 527.4,403.9 528.2,393.4 529.0,402.5 529.8,380.5 530.6,404.0 531.3,395.9 532.1,405.9 532.9,405.6 533.7,403.2 534.4,403.0 535.2,393.5 536.0,404.7 536.8,392.9 537.6,379.3 538.3,406.1 539.1,393.5 539.9,404.5 540.7,392.3 541.4,394.4 542.2,394.7 543.0,398.2 543.8,397.7 544.6,403.6 545.3,404.9 546.1,405.0 546.9,386.2 547.7,406.7 548.4,394.6 549.2,403.3 550.0,406.8 550.8,406.9 551.6,396.2 552.3,404.1 553.1,404.5 553.9,403.8 554.7,396.3 555.4,397.3 556.2,403.2 557.0,393.4 557.8,397.3 558.5,377.0 559.3,406.3 560.1,404.7 560.9,395.9 561.7,383.1 562.4,383.1 563.2,383.1 564.0,383.1 564.8,406.8 565.5,397.4 566.3,406.5 567.1,406.2 567.9,404.4 568.7,397.6 569.4,407.0 570.2,404.5 571.0,403.8 571.8,397.8 572.5,392.9 573.3,405.2 574.1,402.6 574.9,404.3 575.7,391.4 576.4,330.6 577.2,330.6 578.0,330.6 578.8,405.0 579.5,405.3 580.3,396.4 581.1,384.9 581.9,393.6 582.7,404.8 583.4,394.8 584.2,403.6 585.0,403.5 585.8,396.8 586.5,403.7 587.3,397.5 588.1,392.5 588.9,395.6 589.7,386.9 590.4,397.3 591.2,406.5 592.0,394.3 592.8,391.2 593.5,383.2 594.3,394.4 595.1,404.3 595.9,395.9 596.7,395.2 597.4,404.8 598.2,405.2 599.0,406.3 599.8,394.6 600.5,378.2 601.3,406.4 602.1,403.9 602.9,397.4 603.7,403.5 604.4,394.9 605.2,406.8 606.0,402.9 606.8,402.8 607.5,403.7 608.3,404.7 609.1,391.8 609.9,406.2 610.6,405.1 611.4,396.8 612.2,394.3 613.0,406.2 613.8,403.8 614.5,393.6 615.3,404.1 616.1,374.3 616.9,374.3 617.6,374.3 618.4,374.3 619.2,406.5 620.0,397.2 620.8,403.0 621.5,405.7 622.3,397.6 623.1,406.1 623.9,383.4 624.6,406.8 625.4,395.5 626.2,397.0 627.0,397.4 627.8,402.5 628.5,392.8 629.3,393.4 630.1,404.7 630.9,392.5 631.6,406.8 632.4,405.0 633.2,403.5 634.0,397.8 634.8,397.5 635.5,393.3 636.3,404.9 637.1,406.4 637.9,397.8 638.6,406.3 639.4,403.6 640.2,406.5 641.0,391.1 641.8,405.9 642.5,376.0 643.3,376.0 644.1,376.0 644.9,376.0 645.6,385.1 646.4,406.4 647.2,406.2 648.0,396.4 648.8,406.1 649.5,395.7 650.3,392.5 651.1,393.6 651.9,402.5 652.6,405.6 653.4,396.0 654.2,396.9 655.0,402.7 655.8,405.9 656.5,406.7 657.3,394.6 658.1,382.2 658.9,382.2 659.6,383.1 660.4,383.6 661.2,383.6 662.0,383.6 662.7,383.6 663.5,394.7 664.3,392.2 665.1,393.9 665.9,404.9 666.6,404.5 667.4,392.5 668.2,383.0 669.0,383.0 669.7,383.0 670.5,383.0 671.3,383.0 672.1,404.0 672.9,404.9 673.6,391.1 674.4,405.9 675.2,395.0 676.0,406.6 676.7,397.2 677.5,391.3 678.3,391.1 679.1,392.5 679.9,393.4 680.6,402.6 681.4,391.6 682.2,392.3 683.0,392.5 683.7,403.7 684.5,395.2 685.3,395.6 686.1,393.5 686.9,405.0 687.6,407.0 688.4,406.0 689.2,378.4 690.0,394.3 690.7,404.0 691.5,393.9 692.3,392.8 693.1,404.2 693.9,378.9 694.6,394.1 695.4,394.8 696.2,405.5 697.0,405.8 697.7,405.2 698.5,403.4 699.3,404.6 700.1,402.9 700.9,396.2 701.6,405.7 702.4,394.2 703.2,406.4 704.0,392.7 704.7,393.8 705.5,395.9 706.3,404.0 707.1,404.3 707.9,391.1 708.6,403.3 709.4,406.6 710.2,379.3 711.0,392.6 711.7,403.8 712.5,393.6 713.3,395.8 714.1,404.6 714.8,395.8 715.6,407.0 716.4,394.2 717.2,404.2 718.0,405.9 718.7,404.8 719.5,396.2 720.3,406.9 721.1,403.8 721.8,393.2 722.6,392.2 723.4,405.3 724.2,406.8 725.0,405.4 725.7,394.3 726.5,405.0 727.3,397.1 728.1,404.5 728.8,393.9 729.6,396.8 730.4,384.7 731.2,384.7 732.0,384.7 732.7,384.7 733.5,395.2 734.3,398.2 735.1,394.2 735.8,406.3 736.6,395.4 737.4,394.5 738.2,405.4 739.0,393.2 739.7,393.4 740.5,397.3 741.3,393.5 742.1,398.9 742.8,403.3 743.6,396.7 744.4,396.8 745.2,406.5 746.0,403.3 746.7,398.1 747.5,395.0 748.3,405.0 749.1,397.4 749.8,402.8 750.6,406.9 751.4,406.9 752.2,393.5 753.0,397.3 753.7,395.2 754.5,395.8 755.3,406.5 756.1,406.5 756.8,397.7 757.6,394.1 758.4,395.3 759.2,404.4 760.0,394.7 760.7,405.0 761.5,395.7 762.3,395.9 763.1,403.0 763.8,396.4 764.6,399.0 765.4,406.1 766.2,404.1 766.9,396.0 767.7,398.3 768.5,395.9 769.3,405.3 770.1,398.1 770.8,393.1 771.6,406.9 772.4,394.3 773.2,395.0 773.9,398.3 774.7,402.6 775.5,396.7 776.3,403.8 777.1,398.2 777.8,393.4 778.6,397.9 779.4,398.2 780.2,394.1 780.9,395.4 781.7,398.7 782.5,406.3 783.3,404.3 784.1,394.1 784.8,395.8 785.6,396.6 786.4,397.7 787.2,404.4 787.9,393.7 788.7,399.3 789.5,406.9 790.3,399.1 791.1,405.6 791.8,394.3 792.6,397.7 793.4,402.8 794.2,394.5 794.9,405.9 795.7,397.8 796.5,393.2 797.3,395.8 798.1,387.9 798.8,405.8 799.6,403.9 800.4,177.7 801.2,177.7 801.9,177.7 802.7,402.7 803.5,396.2 804.3,406.4 805.1,396.8 805.8,383.1 806.6,403.7 807.4,404.3 808.2,403.5 808.9,397.4 809.7,394.2 810.5,406.0 811.3,393.0 812.0,395.2 812.8,405.9 813.6,378.7 814.4,378.7 815.2,378.7 815.9,395.0 816.7,393.4 817.5,394.3 818.3,404.0 819.0,394.9 819.8,403.8 820.6,405.0 821.4,394.2 822.2,396.0 822.9,403.2 823.7,385.5 824.5,397.8 825.3,378.3 826.0,380.0 826.8,380.0 827.6,380.0 828.4,398.0 829.2,395.5 829.9,394.7 830.7,405.7 831.5,394.7 832.3,397.4 833.0,395.2 833.8,396.4 834.6,382.6 835.4,402.9 836.2,402.9 836.9,402.7 837.7,397.7 838.5,405.4 839.3,403.4 840.0,374.6 840.8,374.6 841.6,374.6 842.4,374.6 843.2,374.6 843.9,404.0 844.7,402.7 845.5,402.7 846.3,394.9 847.0,403.7 847.8,398.5 848.6,406.2 849.4,404.6 850.2,403.7 850.9,397.9 851.7,379.0 852.5,399.0 853.3,406.7 854.0,396.3 854.8,398.4 855.6,399.1 856.4,396.8 857.2,397.7 857.9,406.8 858.7,394.1 859.5,405.0 860.3,397.4 861.0,397.1 861.8,403.8 862.6,396.3 863.4,397.3 864.1,404.9 864.9,394.5 865.7,404.0 866.5,396.3 867.3,403.4 868.0,394.9 868.8,398.7 869.6,405.8 870.4,404.1 871.1,397.6 871.9,397.1 872.7,406.7 873.5,398.8 874.3,396.1 875.0,403.7 875.8,403.1 876.6,403.2 877.4,386.8 878.1,399.8 878.9,398.4 879.7,394.8 880.5,396.4 881.3,394.4 882.0,395.5 882.8,402.9 883.6,404.3 884.4,395.3 885.1,397.1 885.9,403.7 886.7,403.4 887.5,399.2 888.3,403.3 889.0,381.6 889.8,399.3 890.6,406.0 891.4,404.4 892.1,398.3 892.9,395.9 893.7,394.5 894.5,404.2 895.3,404.1 896.0,396.9 896.8,406.5 897.6,381.9 898.4,381.9 899.1,381.9 899.9,399.4 900.7,395.0 901.5,403.5 902.3,396.8 903.0,405.0 903.8,403.6 904.6,398.7 905.4,405.4 906.1,404.3 906.9,405.4 907.7,382.7 908.5,404.7 909.3,398.5 910.0,398.0 910.8,399.9 911.6,406.7 912.4,406.2 913.1,406.0 913.9,403.9 914.7,399.0 915.5,396.8 916.2,406.6 917.0,403.0 917.8,384.3 918.6,406.7 919.4,404.8 920.1,397.7 920.9,396.3 921.7,406.2 922.5,399.0 923.2,395.4 924.0,396.4 924.8,397.1 925.6,406.1 926.4,386.4 927.1,403.9 927.9,394.8 928.7,396.6 929.5,395.2 930.2,395.3 931.0,405.9 931.8,404.8 932.6,394.6 933.4,398.2 934.1,405.6 934.9,399.0 935.7,395.3 936.5,405.8 937.2,406.6 938.0,404.7 938.8,378.4 939.6,397.5 940.4,406.6 941.1,406.1 941.9,395.0 942.7,394.8 943.5,405.1 944.2,404.1 945.0,398.6 945.8,395.9 946.6,398.4 947.4,398.0 948.1,403.0 948.9,399.1 949.7,404.2 950.5,405.7 951.2,394.0 952.0,403.7 952.8,405.1 953.6,396.9 954.4,403.7 955.1,405.7 955.9,399.5 956.7,403.2 957.5,406.2 958.2,395.0 959.0,405.5 959.8,406.4 960.6,406.2 961.4,406.0 962.1,396.1 962.9,396.3 963.7,397.4 964.5,398.4 965.2,406.1 966.0,377.6 966.8,396.6 967.6,395.0 968.3,405.4 969.1,407.0 969.9,399.1 970.7,406.6 971.5,405.3 972.2,402.5 973.0,402.9 973.8,394.1 974.6,397.0 975.3,396.7 976.1,393.2 976.9,378.1 977.7,396.7 978.5,403.7 979.2,394.7 980.0,405.7 980.8,393.0 981.6,393.8 982.3,397.9 983.1,406.6 983.9,394.7 984.7,403.9 985.5,396.3 986.2,403.4 987.0,405.7 987.8,395.0 988.6,312.5 989.3,312.5 990.1,312.5 990.9,398.2 991.7,394.8 992.5,394.9 993.2,394.4 994.0,406.6 994.8,396.0 995.6,406.1 996.3,396.9 997.1,403.4 997.9,384.6 998.7,405.7 999.5,396.5 1000.2,405.7 1001.0,406.5 1001.8,395.1 1002.6,399.1 1003.3,406.5 1004.1,406.6 1004.9,393.8 1005.7,399.2 1006.5,393.8 1007.2,393.9 1008.0,394.5 1008.8,393.7 1009.6,403.1 1010.3,395.0 1011.1,399.2 1011.9,399.2 1012.7,404.0 1013.5,398.6 1014.2,395.0 1015.0,394.8 1015.8,394.1 1016.6,403.8 1017.3,395.1 1018.1,396.0 1018.9,403.2 1019.7,396.4 1020.4,405.9 1021.2,399.4 1022.0,394.6 1022.8,406.7 1023.6,399.5 1024.3,384.3 1025.1,395.2 1025.9,403.5 1026.7,377.3 1027.4,377.3 1028.2,377.3 1029.0,377.3 1029.8,377.3 1030.6,396.8 1031.3,398.5 1032.1,395.1 1032.9,402.6 1033.7,395.2 1034.4,405.3 1035.2,396.9 1036.0,406.2 1036.8,404.8 1037.6,399.2 1038.3,397.0 1039.1,395.8 1039.9,398.4 1040.7,403.1 1041.4,404.9 1042.2,395.8 1043.0,403.6 1043.8,240.1 1044.6,240.1 1045.3,240.1 1046.1,396.1 1046.9,395.7 1047.7,397.9 1048.4,403.6 1049.2,395.0 1050.0,396.3 1050.8,404.7 1051.6,405.7 1052.3,393.3 1053.1,396.2 1053.9,403.6 1054.7,402.9 1055.4,396.4 1056.2,395.2 1057.0,393.9 1057.8,394.3 1058.6,394.3 1059.3,404.8 1060.1,405.9 1060.9,406.4 1061.7,396.7 1062.4,398.1 1063.2,395.8 1064.0,402.5 1064.8,405.4 1065.6,404.9 1066.3,395.7 1067.1,397.7 1067.9,405.1 1068.7,397.5 1069.4,405.0 1070.2,394.2 1071.0,395.5 1071.8,394.0 1072.5,394.3 1073.3,396.6 1074.1,402.9 1074.9,403.5 1075.7,404.7 1076.4,403.6 1077.2,405.9 1078.0,394.4 1078.8,381.2 1079.5,395.9 1080.3,406.9 1081.1,394.8 1081.9,406.0 1082.7,397.1 1083.4,395.5 1084.2,398.8 1085.0,403.5 1085.8,394.0 1086.5,394.2 1087.3,404.4 1088.1,396.6 1088.9,397.4 1089.7,398.5 1090.4,397.3 1091.2,397.5 1092.0,396.4 1092.8,396.8 1093.5,405.8 1094.3,404.0 1095.1,405.8 1095.9,397.2 1096.7,403.0 1097.4,397.2 1098.2,395.7 1099.0,396.3 1099.8,394.2 1100.5,396.2 1101.3,396.4 1102.1,383.4 1102.9,383.4 1103.7,383.4 1104.4,401.8 1105.2,402.2 1106.0,403.8 1106.8,399.4 1107.5,400.8 1108.3,399.8 1109.1,402.6 1109.9,402.1 1110.7,401.9 1111.4,404.4 1112.2,404.9 1113.0,401.4 1113.8,402.8 1114.5,399.9 1115.3,400.4 1116.1,401.0 1116.9,401.5 1117.7,403.5 1118.4,401.5 1119.2,401.0 1120.0,403.4 1120.8,402.2 1121.5,404.6 1122.3,400.9 1123.1,402.4 1123.9,403.7 1124.6,400.7 1125.4,400.2 1126.2,403.7 1127.0,404.9 1127.8,401.5 1128.5,399.2 1129.3,404.5 1130.1,400.1 1130.9,401.3 1131.6,400.7 1132.4,404.9 1133.2,402.6 1134.0,404.7 1134.8,406.2 1135.5,405.5 1136.3,393.4 1137.1,402.7 1137.9,406.8 1138.6,397.9 1139.4,405.7 1140.2,393.3 1141.0,385.0 1141.8,385.0 1142.5,404.9 1143.3,402.5 1144.1,394.5 1144.9,397.1 1145.6,395.7 1146.4,396.3 1147.2,395.7 1148.0,397.8 1148.8,406.5 1149.5,395.2 1150.3,406.6 1151.1,406.7 1151.9,397.2 1152.6,397.6 1153.4,392.5 1154.2,394.2 1155.0,393.6 1155.8,398.6 1156.5,376.5 1157.3,376.5 1158.1,376.5 1158.9,403.2 1159.6,398.1 1160.4,384.9 1161.2,384.9 1162.0,384.9 1162.8,395.2 1163.5,403.2 1164.3,398.7 1165.1,403.3 1165.9,404.5 1166.6,383.0 1167.4,383.0 1168.2,383.0 1169.0,383.0 1169.8,383.0 1170.5,395.8 1171.3,404.5 1172.1,404.2 1172.9,406.6 1173.6,399.3 1174.4,382.6 1175.2,402.5 1176.0,399.3 1176.7,399.2 1177.5,397.6 1178.3,385.0 1179.1,404.7 1179.9,403.9 1180.6,395.8 1181.4,397.8 1182.2,392.7 1183.0,405.4 1183.7,392.7 1184.5,403.5 1185.3,394.6 1186.1,404.6 1186.9,406.2 1187.6,404.8 1188.4,404.9 1189.2,395.8 1190.0,398.5 1190.7,406.7 1191.5,379.5 1192.3,379.5 1193.1,379.5 1193.9,403.5 1194.6,402.6 1195.4,399.0 1196.2,405.5 1197.0,405.5 1197.7,403.9 1198.5,403.4 1199.3,394.4 1200.1,385.4 1200.9,398.8 1201.6,403.9 1202.4,406.9 1203.2,399.0 1204.0,402.9 1204.7,396.6 1205.5,399.0 1206.3,396.1 1207.1,376.8 1207.9,404.3 1208.6,406.9 1209.4,405.8 1210.2,398.4 1211.0,396.9 1211.7,403.4 1212.5,406.5 1213.3,404.0 1214.1,406.1 1214.9,403.8 1215.6,405.0 1216.4,403.5 1217.2,398.5 1218.0,403.8 1218.7,396.3 1219.5,396.5 1220.3,397.4 1221.1,404.5 1221.9,383.1 1222.6,383.1 1223.4,383.1 1224.2,406.0 1225.0,382.2 1225.7,392.5 1226.5,395.3 1227.3,406.2 1228.1,405.8 1228.8,395.8 1229.6,398.7 1230.4,404.8 1231.2,394.5 1232.0,404.8 1232.7,406.7 1233.5,395.5 1234.3,397.3 1235.1,406.8 1235.8,394.5 1236.6,404.7 1237.4,405.2 1238.2,393.5 1239.0,405.7 1239.7,406.7 1240.5,397.8 1241.3,396.1 1242.1,393.2 1242.8,402.9 1243.6,405.6 1244.4,395.6 1245.2,394.8 1246.0,402.8 1246.7,397.6 1247.5,393.5 1248.3,376.9 1249.1,393.4 1249.8,393.3 1250.6,380.2 1251.4,380.2 1252.2,380.2 1253.0,405.9 1253.7,397.2 1254.5,397.3 1255.3,406.6 1256.1,314.5 1256.8,314.5 1257.6,314.5 1258.4,406.3 1259.2,395.5 1260.0,398.1 1260.7,392.6 1261.5,394.7 1262.3,393.1 1263.1,392.9 1263.8,406.0 1264.6,392.5 1265.4,397.0 1266.2,405.1 1267.0,406.7 1267.7,404.5 1268.5,396.0 1269.3,397.7 1270.1,398.3 1270.8,393.2 1271.6,394.1 1272.4,404.9 1273.2,393.1 1274.0,393.1 1274.7,395.6 1275.5,403.4 1276.3,339.6 1277.1,339.6 1277.8,339.6 1278.6,403.0 1279.4,406.4 1280.2,405.7 1280.9,405.9 1281.7,392.2 1282.5,377.2 1283.3,374.8 1284.1,374.8 1284.8,403.8 1285.6,406.5 1286.4,402.9 1287.2,397.2 1287.9,392.4 1288.7,395.0 1289.5,397.7 1290.3,406.1 1291.1,406.9 1291.8,406.5 1292.6,398.6 1293.4,397.6 1294.2,404.8 1294.9,388.8 1295.7,405.8 1296.5,395.3 1297.3,394.4 1298.1,377.7 1298.8,377.7 1299.6,377.7 1300.4,403.7 1301.2,395.4 1301.9,405.8 1302.7,406.1 1303.5,406.5 1304.3,394.7 1305.1,394.0 1305.8,393.5 1306.6,403.0 1307.4,394.4 1308.2,406.2 1308.9,403.4 1309.7,403.9 1310.5,405.9 1311.3,397.8 1312.1,395.9 1312.8,395.4 1313.6,398.1 1314.4,393.5 1315.2,403.9 1315.9,404.3 1316.7,398.0 1317.5,393.8 1318.3,406.3 1319.1,399.0 1319.8,398.8 1320.6,394.5 1321.4,396.1 1322.2,405.3 1322.9,393.7 1323.7,396.4 1324.5,407.0 1325.3,404.3 1326.1,394.9 1326.8,396.4 1327.6,379.6 1328.4,395.5 1329.2,397.1 1329.9,405.8 1330.7,394.4 1331.5,404.6 1332.3,398.7 1333.0,387.1 1333.8,394.4 1334.6,402.5 1335.4,406.9 1336.2,396.7 1336.9,404.3 1337.7,397.5 1338.5,405.6 1339.3,406.6 1340.0,406.7 1340.8,405.3 1341.6,395.8 1342.4,397.5 1343.2,397.5 1343.9,387.5 1344.7,404.7 1345.5,405.2 1346.3,395.5 1347.0,394.1 1347.8,395.7 1348.6,397.1 1349.4,386.6 1350.2,395.1 1350.9,398.1 1351.7,404.7 1352.5,395.4 1353.3,395.2 1354.0,393.3 1354.8,395.7 1355.6,402.5 1356.4,396.9 1357.2,398.3 1357.9,394.2 1358.7,403.6 1359.5,406.6 1360.3,404.2 1361.0,387.9 1361.8,403.1 1362.6,397.1 1363.4,404.9 1364.2,407.0 1364.9,394.0 1365.7,406.0 1366.5,386.7 1367.3,386.7 1368.0,386.7 1368.8,332.6 1369.6,332.6 1370.4,332.6 1371.2,399.0 1371.9,395.7 1372.7,396.2 1373.5,404.1 1374.3,397.4 1375.0,398.5 1375.8,403.0 1376.6,381.8 1377.4,405.4 1378.2,394.7 1378.9,394.8 1379.7,394.3 1380.5,398.3 1381.3,406.0 1382.0,405.9 1382.8,396.4 1383.6,386.7 1384.4,395.9 1385.1,403.1 1385.9,397.1 1386.7,397.0 1387.5,404.7 1388.3,394.1 1389.0,393.5 1389.8,385.4 1390.6,385.4 1391.4,385.4 1392.1,385.4 1392.9,394.1 1393.7,396.8 1394.5,394.0 1395.3,395.0 1396.0,406.7 1396.8,406.8 1397.6,374.3 1398.4,374.3 1399.1,374.3 1399.9,374.3 1400.7,374.3 1401.5,398.2 1402.3,393.9 1403.0,384.7 1403.8,384.7 1404.6,398.8 1405.4,398.5 1406.1,400.2 1406.9,400.9 1407.7,399.8 1408.5,403.7 1409.3,398.5 1410.0,402.2 1410.8,401.9 1411.6,404.4 1412.4,404.0 1413.1,398.9 1413.9,403.3 1414.7,401.5 1415.5,400.1 1416.3,400.1 1417.0,401.8 1417.8,400.3 1418.6,399.5 1419.4,403.3 1420.1,402.2 1420.9,401.0 1421.7,400.3 1422.5,401.1 1423.3,404.3 1424.0,403.0 1424.8,402.3 1425.6,399.3 1426.4,400.8 1427.1,402.8 1427.9,401.1 1428.7,402.7 1429.5,405.7 1430.3,394.9 1431.0,397.6 1431.8,406.2 1432.6,399.5 1433.4,406.1 1434.1,405.6 1434.9,384.5 1435.7,397.5 1436.5,402.9 1437.2,398.4 1438.0,402.9 1438.8,396.1 1439.6,396.4 1440.4,394.7 1441.1,394.7 1441.9,402.6 1442.7,397.3 1443.5,393.2 1444.2,378.2 1445.0,397.7 1445.8,403.4 1446.6,395.0 1447.4,403.6 1448.1,398.4 1448.9,406.5 1449.7,406.2 1450.5,406.8 1451.2,399.1 1452.0,399.2 1452.8,399.3 1453.6,397.3 1454.4,397.1 1455.1,396.5 1455.9,402.9 1456.7,404.3 1457.5,405.7 1458.2,399.5 1459.0,396.6 1459.8,398.0 1460.6,394.4 1461.4,404.5 1462.1,397.4 1462.9,406.6 1463.7,403.1 1464.5,398.1 1465.2,396.2 1466.0,379.2 1466.8,395.1 1467.6,394.8 1468.4,361.7 1469.1,361.7 1469.9,361.7 1470.7,398.3 1471.5,396.2 1472.2,406.3 1473.0,381.1 1473.8,396.7 1474.6,382.7 1475.4,382.7 1476.1,382.7 1476.9,382.7 1477.7,382.7 1478.5,393.3 1479.2,405.5 1480.0,406.2 1480.8,403.4 1481.6,398.2 1482.4,386.7 1483.1,387.6 1483.9,404.4 1484.7,392.4 1485.5,393.5 1486.2,406.0 1487.0,394.6 1487.8,395.3 1488.6,402.9 1489.3,394.7 1490.1,403.6 1490.9,396.1 1491.7,393.9 1492.5,404.1 1493.2,393.0 1494.0,403.3 1494.8,393.5 1495.6,393.4 1496.3,405.9 1497.1,396.7 1497.9,403.6 1498.7,403.1 1499.5,406.8 1500.2,405.7 1501.0,393.7 1501.8,393.2 1502.6,393.1 1503.3,398.0 1504.1,395.8 1504.9,395.4 1505.7,406.5 1506.5,402.7 1507.2,403.0 1508.0,405.4 1508.8,404.0 1509.6,394.7 1510.3,393.9 1511.1,405.0 1511.9,403.6 1512.7,393.5 1513.5,393.8 1514.2,404.3 1515.0,405.0 1515.8,405.3 1516.6,404.6 1517.3,406.7 1518.1,395.3 1518.9,403.9 1519.7,402.7 1520.5,393.6 1521.2,396.3 1522.0,407.0 1522.8,394.2 1523.6,398.9 1524.3,395.2 1525.1,393.5 1525.9,397.6 1526.7,404.1 1527.5,404.4 1528.2,405.4 1529.0,404.6 1529.8,379.5 1530.6,395.8 1531.3,405.4 1532.1,377.0 1532.9,377.0 1533.7,396.8 1534.5,405.5 1535.2,393.6 1536.0,404.8 1536.8,403.4 1537.6,396.1 1538.3,404.6 1539.1,396.5 1539.9,405.6 1540.7,394.4 1541.4,397.2 1542.2,394.8 1543.0,396.0 1543.8,396.3 1544.6,405.3 1545.3,395.3 1546.1,403.9 1546.9,399.0 1547.7,404.1 1548.4,396.4 1549.2,284.3 1550.0,284.3 1550.8,284.3 1551.6,284.3 1552.3,396.7 1553.1,404.3 1553.9,393.2 1554.7,403.3 1555.4,398.7 1556.2,402.7 1557.0,404.5 1557.8,405.6 1558.6,398.3 1559.3,393.5 1560.1,404.1 1560.9,406.3 1561.7,393.1 1562.4,406.5 1563.2,406.1 1564.0,399.2"/><circle cx="239.7" cy="27.7" r="4.5" fill="#c9efe0" stroke="#10b47f" stroke-width="3"/></svg><span class="t" style="right:1723.3px;top:1706.2px;font-size:24.5px;color:#666;transform-origin:100% 50%;transform:rotate(-50deg)">2024-01-01 00:00:56</span><span class="t" style="right:1678.5px;top:1706.2px;font-size:24.5px;color:#666;transform-origin:100% 50%;transform:rotate(-50deg)">2024-01-01 14:36:04</span><span class="t" style="right:1633.8px;top:1706.2px;font-size:24.5px;color:#666;transform-origin:100% 50%;transform:rotate(-50deg)">2024-01-02 05:12:05</span><span class="t" style="right:1589.0px;top:1706.2px;font-size:24.5px;color:#666;transform-origin:100% 50%;transform:rotate(-50deg)">2024-01-02 19:48:04</span><span class="t" style="right:1544.3px;top:1706.2px;font-size:24.5px;color:#666;transform-origin:100% 50%;transform:rotate(-50deg)">2024-01-03 10:24:04</span><span class="t" style="right:1499.5px;top:1706.2px;font-size:24.5px;color:#666;transform-origin:100% 50%;transform:rotate(-50deg)">2024-01-04 01:00:04</span><span class="t" style="right:1454.8px;top:1706.2px;font-size:24.5px;color:#666;transform-origin:100% 50%;transform:rotate(-50deg)">2024-01-04 15:36:25</span><span class="t" style="right:1410.0px;top:1706.2px;font-size:24.5px;color:#666;transform-origin:100% 50%;transform:rotate(-50deg)">2024-01-05 06:12:08</span><span class="t" style="right:1365.3px;top:1706.2px;font-size:24.5px;color:#666;transform-origin:100% 50%;transform:rotate(-50deg)">2024-01-05 20:48:07</span><span class="t" style="right:1320.5px;top:1706.2px;font-size:24.5px;color:#666;transform-origin:100% 50%;transform:rotate(-50deg)">2024-01-06 11:24:08</span><span class="t" style="right:1275.8px;top:1706.2px;font-size:24.5px;color:#666;transform-origin:100% 50%;transform:rotate(-50deg)">2024-01-07 02:00:08</span><span class="t" style="right:1231.0px;top:1706.2px;font-size:24.5px;color:#666;transform-origin:100% 50%;transform:rotate(-50deg)">2024-01-07 16:36:08</span><span class="t" style="right:1186.3px;top:1706.2px;font-size:24.5px;color:#666;transform-origin:100% 50%;transform:rotate(-50deg)">2024-01-08 07:12:07</span><span class="t" style="right:1141.5px;top:1706.2px;font-size:24.5px;color:#666;transform-origin:100% 50%;transform:rotate(-50deg)">2024-01-08 21:48:07</span><span class="t" style="right:1096.8px;top:1706.2px;font-size:24.5px;color:#666;transform-origin:100% 50%;transform:rotate(-50deg)">2024-01-09 12:24:08</span><span class="t" style="right:1052.0px;top:1706.2px;font-size:24.5px;color:#666;transform-origin:100% 50%;transform:rotate(-50deg)">2024-01-10 03:00:08</span><span class="t" style="right:1007.3px;top:1706.2px;font-size:24.5px;color:#666;transform-origin:100% 50%;transform:rotate(-50deg)">2024-01-10 17:36:07</span><span class="t" style="right:962.5px;top:1706.2px;font-size:24.5px;color:#666;transform-origin:100% 50%;transform:rotate(-50deg)">2024-01-11 08:12:08</span><span class="t" style="right:917.8px;top:1706.2px;font-size:24.5px;color:#666;transform-origin:100% 50%;transform:rotate(-50deg)">2024-01-11 22:48:08</span><span class="t" style="right:873.0px;top:1706.2px;font-size:24.5px;color:#666;transform-origin:100% 50%;transform:rotate(-50deg)">2024-01-12 13:24:08</span><span class="t" style="right:828.3px;top:1706.2px;font-size:24.5px;color:#666;transform-origin:100% 50%;transform:rotate(-50deg)">2024-01-13 04:00:07</span><span class="t" style="right:783.5px;top:1706.2px;font-size:24.5px;color:#666;transform-origin:100% 50%;transform:rotate(-50deg)">2024-01-13 18:36:08</span><span class="t" style="right:738.8px;top:1706.2px;font-size:24.5px;color:#666;transform-origin:100% 50%;transform:rotate(-50deg)">2024-01-14 09:12:08</span><span class="t" style="right:694.0px;top:1706.2px;font-size:24.5px;color:#666;transform-origin:100% 50%;transform:rotate(-50deg)">2024-01-14 23:48:08</span><span class="t" style="right:649.3px;top:1706.2px;font-size:24.5px;color:#666;transform-origin:100% 50%;transform:rotate(-50deg)">2024-01-15 14:24:08</span><span class="t" style="right:604.5px;top:1706.2px;font-size:24.5px;color:#666;transform-origin:100% 50%;transform:rotate(-50deg)">2024-01-16 05:00:08</span><span class="t" style="right:559.8px;top:1706.2px;font-size:24.5px;color:#666;transform-origin:100% 50%;transform:rotate(-50deg)">2024-01-16 19:36:08</span><span class="t" style="right:515.0px;top:1706.2px;font-size:24.5px;color:#666;transform-origin:100% 50%;transform:rotate(-50deg)">2024-01-17 10:12:08</span><span class="t" style="right:470.3px;top:1706.2px;font-size:24.5px;color:#666;transform-origin:100% 50%;transform:rotate(-50deg)">2024-01-18 00:48:08</span><span class="t" style="right:425.6px;top:1706.2px;font-size:24.5px;color:#666;transform-origin:100% 50%;transform:rotate(-50deg)">2024-01-18 15:24:08</span><span class="t" style="right:380.8px;top:1706.2px;font-size:24.5px;color:#666;transform-origin:100% 50%;transform:rotate(-50deg)">2024-01-19 06:00:08</span><span class="t" style="right:336.1px;top:1706.2px;font-size:24.5px;color:#666;transform-origin:100% 50%;transform:rotate(-50deg)">2024-01-19 20:36:08</span><span class="t" style="right:291.3px;top:1706.2px;font-size:24.5px;color:#666;transform-origin:100% 50%;transform:rotate(-50deg)">2024-01-20 11:12:08</span><span class="t" style="right:246.6px;top:1706.2px;font-size:24.5px;color:#666;transform-origin:100% 50%;transform:rotate(-50deg)">2024-01-21 01:48:08</span><span class="t" style="right:201.8px;top:1706.2px;font-size:24.5px;color:#666;transform-origin:100% 50%;transform:rotate(-50deg)">2024-01-21 16:24:08</span><div class="a" style="left:835px;top:1359.5px;width:409.5px;height:164px;border-radius:14px;background:#1c1e23"></div><svg style="left:1027px;top:1347px" width="26" height="14" viewBox="0 0 26 14"><path d="M0 14 L13 1 L26 14Z" fill="#1c1e23"/></svg><span id="t40" class="t" style="left:871.2px;top:1399.7px;font-size:32.3px;font-weight:700;color:#fff;letter-spacing:1.863px;-webkit-text-stroke:.4px #fff;">2024-01-19 03:07:05</span><div class="a" style="left:871px;top:1458px;width:26px;height:26px;box-sizing:border-box;border:2px solid #10b47f;background:#d3f1e6"></div><span id="t41" class="t" style="left:915.3px;top:1456.2px;font-size:29.5px;font-weight:400;color:#fff;letter-spacing:-0.863px;-webkit-text-stroke:.3px #fff;">CPU usage: 37.70%</span></div></body></html>
